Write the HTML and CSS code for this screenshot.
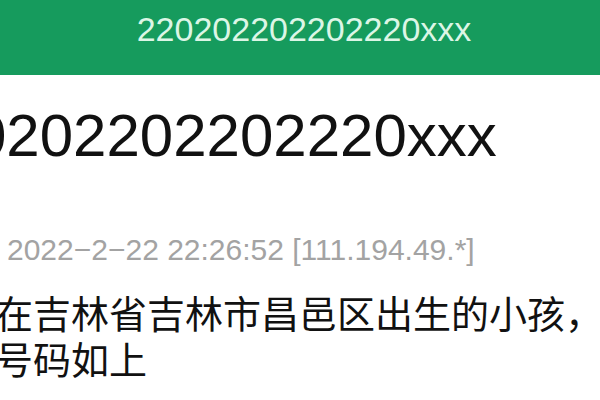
FILE: index.html
```
<!DOCTYPE html>
<html lang="zh-CN">
<head>
<meta charset="utf-8">
<link rel="stylesheet" href="styles.css">
</head>
<body>
<div class="topbar"><span class="topbar-title">220202202202220xxx</span></div>
<div class="post">
  <div class="post-number">0202202202220xxx</div>
  <div class="post-meta">2022−2−22 22:26:52 [111.194.49.*]</div>
  <div class="post-text">在吉林省吉林市昌邑区出生的小孩，<br>号码如上</div>
</div>
</body>
</html>
```
FILE: styles.css
```
html, body {
  margin: 0;
  padding: 0;
  background: #ffffff;
  width: 600px;
  height: 400px;
  overflow: hidden;
}
body {
  font-family: "Liberation Sans", Arial, sans-serif;
}
.topbar {
  height: 75px;
  background: #169b5d;
  display: flex;
  align-items: center;
  justify-content: center;
  padding-left: 8px;
  box-sizing: border-box;
}
.topbar-title {
  color: #dcf6e6;
  font-size: 34px;
  line-height: 34px;
  margin-top: -17px;
}
.post {
  display: flex;
  flex-direction: column;
}
.post-number {
  margin-top: 31px;
  margin-left: -27px;
  font-size: 60px;
  line-height: 60px;
  color: #111111;
  white-space: nowrap;
}
.post-meta {
  margin-top: 69px;
  margin-left: 7px;
  font-size: 30px;
  line-height: 30px;
  color: #a3a3a3;
  white-space: nowrap;
}
.post-text {
  margin-top: 24px;
  margin-left: -5px;
  font-family: "Noto Sans CJK SC", "Noto Sans", sans-serif;
  font-size: 38px;
  line-height: 46px;
  color: #111111;
  white-space: nowrap;
}
```
